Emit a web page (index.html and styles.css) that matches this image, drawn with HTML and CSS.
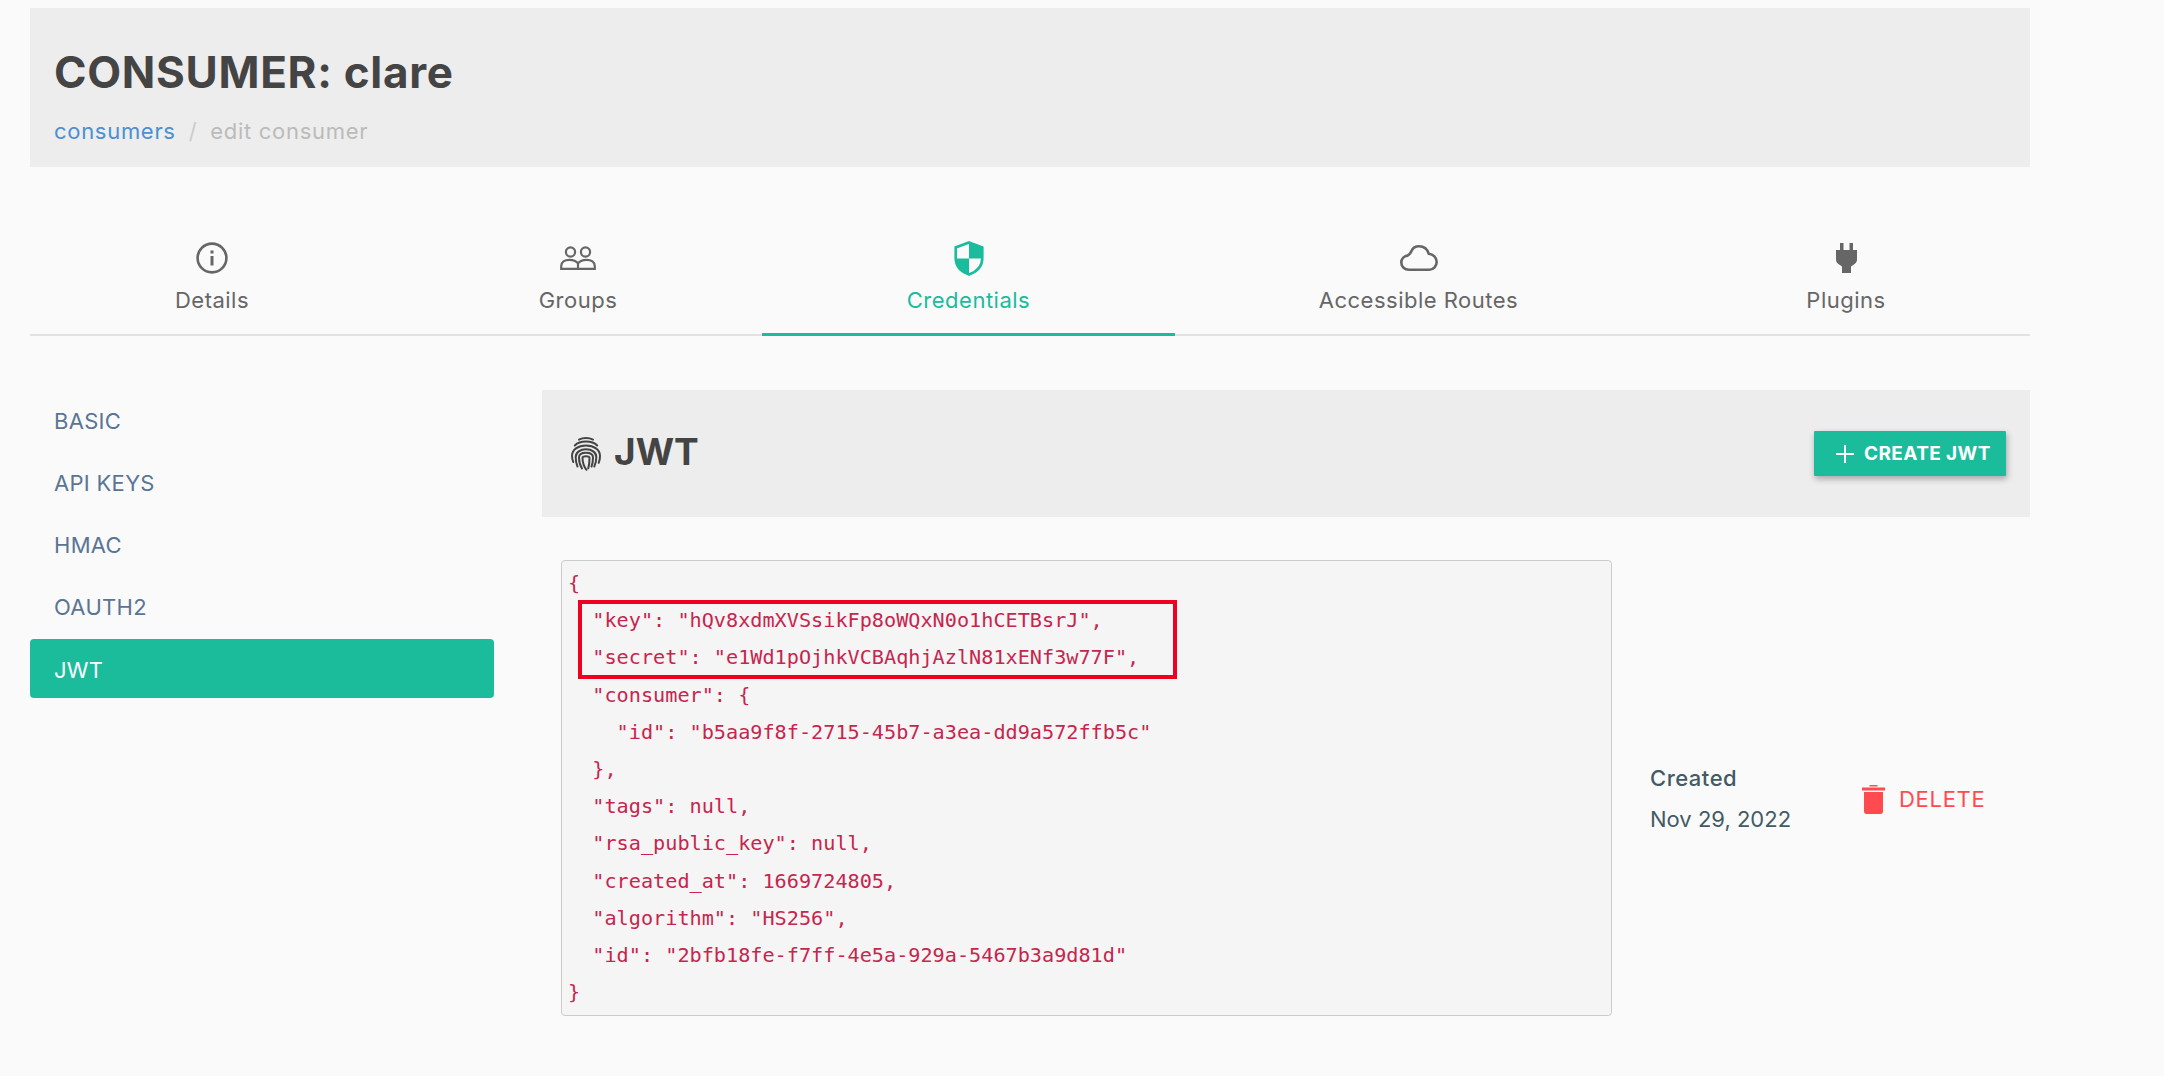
FILE: index.html
```html
<!DOCTYPE html>
<html lang="en">
<head>
<meta charset="utf-8">
<title>Consumer: clare</title>
<link rel="stylesheet" href="styles.css">
</head>
<body>
<main class="page">
  <header class="page-head">
    <h1 class="page-title">CONSUMER: clare</h1>
    <nav class="crumbs"><a class="crumb-link">consumers</a><span class="crumb-sep">/</span><span class="crumb-current">edit consumer</span></nav>
  </header>

  <nav class="tabs">
    <a class="tab">
      <span class="tab-slot"><svg width="32" height="32" viewBox="0 0 32 32" fill="none" stroke="currentColor" stroke-width="2.6"><circle cx="16" cy="16" r="14.4"/><path d="M16 14v9.5" stroke-width="3"/><path d="M16 8.5v3" stroke-width="3"/></svg></span>
      <span class="tab-label">Details</span>
    </a>
    <a class="tab">
      <span class="tab-slot"><svg width="36" height="24" viewBox="0 0 36 24" fill="none" stroke="currentColor" stroke-width="2.2"><circle cx="10.5" cy="6" r="4.6"/><circle cx="25.5" cy="6" r="4.6"/><path d="M1.2 22.8v-2.6c0-4 3.4-6.4 8.3-6.4 3.6 0 6.7 1.3 8.5 3.6 1.8-2.3 4.9-3.6 8.5-3.6 4.9 0 8.3 2.4 8.3 6.4v2.6zM18 17.4v5.4"/></svg></span>
      <span class="tab-label">Groups</span>
    </a>
    <a class="tab tab-active">
      <span class="tab-slot"><svg width="30" height="35" viewBox="0 0 30 35" fill="none"><path d="M15 1.5 28.300 6.500v10.500c0 8-5.300 13.700-13.300 16.500C7 30.700 1.700 25 1.700 17V6.500z" stroke="currentColor" stroke-width="2.600" fill="#fafafa"/><path d="M15 1.500 28.300 6.500V17.500H15zM15 17.500V33.500C7 30.700 1.700 25 1.700 17.500z" fill="currentColor"/></svg></span>
      <span class="tab-label">Credentials</span>
    </a>
    <a class="tab">
      <span class="tab-slot"><svg width="38" height="26" viewBox="0 0 38 26" fill="none" stroke="currentColor" stroke-width="2.6" stroke-linejoin="round"><path d="M9 24.700C4.600 24.700 1.300 21.700 1.300 17.600c0-3.600 2.600-6.500 6.200-7C9.500 9.500 10.500 8.500 11.500 6 12.800 3 15.500 1.300 19 1.300c5 0 8.500 3.200 9.800 7.500 4.400.4 7.900 3.700 7.900 8 0 4.500-3.200 7.900-7.300 7.900z"/></svg></span>
      <span class="tab-label">Accessible Routes</span>
    </a>
    <a class="tab">
      <span class="tab-slot"><svg width="21" height="30" viewBox="0 0 21 30" fill="currentColor"><rect x="4" y="0" width="3.500" height="8"/><rect x="13.500" y="0" width="3.500" height="8"/><path d="M0 7h21v9.500c0 2.500-1.300 4-3.500 5.300L15 23.500V30H6v-6.500l-2.500-1.700C1.300 20.500 0 19 0 16.500z"/></svg></span>
      <span class="tab-label">Plugins</span>
    </a>
  </nav>

  <div class="workspace">
    <aside class="side-nav">
      <a class="side-item">BASIC</a>
      <a class="side-item">API KEYS</a>
      <a class="side-item">HMAC</a>
      <a class="side-item">OAUTH2</a>
      <a class="side-item side-item-active">JWT</a>
    </aside>

    <section class="content">
      <div class="panel-head">
        <h2 class="panel-title">
          <svg width="30" height="34" viewBox="0 0 30 34" fill="none" stroke="#444" stroke-width="2" stroke-linecap="round"><path d="M8 2.600C10 1.600 12.500 1.100 15 1.100s5 .5 7 1.500"/><path d="M3.800 8.500C6.500 5.800 10.500 4.600 15 4.600s8.500 1.200 11.200 3.900"/><path d="M2.300 25c-.9-2-1.300-4-1.300-6.200C1 12.500 7 8.600 15 8.600s14 3.900 14 10.200c0 2.700-.4 5-1.300 7"/><path d="M6.500 29.500C5.200 26.500 4.700 23.500 4.700 20c0-4.800 4.700-7.700 10.300-7.700S25.300 15.200 25.300 20c0 3-.5 6.500-2 9.500"/><path d="M11 31.500c-1.900-3-3-6.500-3-11 0-3 3-4.700 7-4.700s7 1.700 7 4.700c0 3.500-.4 6.500-1.500 9"/><path d="M15.500 32.800c-2.700-3.300-4-7.500-4-12 0-1 1.500-1.600 3.500-1.600s3.500.6 3.500 1.600c0 4-.4 7.700-1.200 10.500"/></svg>
          <span>JWT</span>
        </h2>
        <button class="create-btn" type="button"><svg width="18" height="18" viewBox="0 0 18 18" stroke="currentColor" stroke-width="2"><path d="M9 0v18M0 9h18"/></svg><span>CREATE JWT</span></button>
      </div>

      <div class="cred-row">
        <div class="code-wrap">
<pre class="code">{
  "key": "hQv8xdmXVSsikFp8oWQxN0o1hCETBsrJ",
  "secret": "e1Wd1pOjhkVCBAqhjAzlN81xENf3w77F",
  "consumer": {
    "id": "b5aa9f8f-2715-45b7-a3ea-dd9a572ffb5c"
  },
  "tags": null,
  "rsa_public_key": null,
  "created_at": 1669724805,
  "algorithm": "HS256",
  "id": "2bfb18fe-f7ff-4e5a-929a-5467b3a9d81d"
}</pre>
          <div class="highlight-box"></div>
        </div>
        <div class="meta">
          <div class="meta-label">Created</div>
          <div class="meta-value">Nov 29, 2022</div>
        </div>
        <a class="delete"><svg width="23" height="29" viewBox="0 0 23 29" fill="currentColor"><path d="M7.500 1.500h8V0h-8zM0 2.500h23v3H0zM2 7h19v19.500c0 1.400-1.100 2.500-2.500 2.500h-14C3.100 29 2 27.900 2 26.500z"/></svg><span>DELETE</span></a>
      </div>
    </section>
  </div>
</main>
</body>
</html>
```
FILE: styles.css
```css
* { box-sizing: border-box; }

html, body { margin: 0; height: 100%; }

body {
  background: #fafafa;
  font-family: Inter, "Noto Sans", sans-serif;
  color: #444;
}

.page { width: 2000px; margin-left: 30px; padding-top: 8px; }

.page-head {
  height: 159px;
  background: #ededed;
  padding: 0 24px;
  display: flex;
  flex-direction: column;
}

.page-title {
  margin: 39px 0 0;
  font-size: 44px;
  line-height: 50px;
  font-weight: 700;
  color: #444;
  letter-spacing: .7px;
}

.crumbs {
  margin-top: 19px;
  font-size: 22px;
  line-height: 30px;
  letter-spacing: .7px;
  display: flex;
}

.crumb-link { color: #4a90d2; }
.crumb-sep { color: #ccc; margin: 0 13px; }
.crumb-current { color: #bbb; }

.tabs {
  margin-top: 43px;
  height: 126px;
  display: grid;
  grid-template-columns: 364px 368px 413px 487px 368px;
  border-bottom: 2px solid #e2e2e2;
}

.tab {
  color: #666;
  font-size: 22px;
  letter-spacing: .5px;
  height: 126px;
  padding-top: 30px;
  display: flex;
  flex-direction: column;
  align-items: center;
}

.tab-slot { height: 36px; display: flex; align-items: center; justify-content: center; }
.tab-label { margin-top: 9px; line-height: 30px; white-space: nowrap; }

.tab-active { color: #1abc9c; border-bottom: 3px solid #1abc9c; }

.workspace {
  margin-top: 54px;
  display: flex;
  gap: 48px;
  align-items: flex-start;
}

.side-nav {
  width: 464px;
  flex: none;
  display: flex;
  flex-direction: column;
  gap: 3.250px;
}

.side-item {
  height: 59px;
  padding: 2px 0 0 24px;
  display: flex;
  align-items: center;
  font-size: 22px;
  letter-spacing: .3px;
  color: #5a7594;
  border-radius: 4px;
}

.side-item-active { background: #1abc9c; color: #fff; }

.content { flex: 1; min-width: 0; }

.panel-head {
  height: 127px;
  background: #ededed;
  display: flex;
  align-items: center;
  justify-content: space-between;
  padding: 0 24px 0 29px;
}

.panel-title {
  margin: 0;
  display: flex;
  align-items: center;
  gap: 13px;
  font-size: 37px;
  font-weight: 700;
  color: #444;
}

.panel-title span { margin-bottom: 5px; }

.create-btn {
  width: 192px;
  height: 45px;
  border: 0;
  border-radius: 1px;
  background: #1abc9c;
  color: #fff;
  font-family: inherit;
  font-size: 19px;
  font-weight: 700;
  letter-spacing: .4px;
  display: flex;
  align-items: center;
  gap: 10px;
  padding: 0 0 0 22px;
  box-shadow: 1px 3px 6px rgba(0, 0, 0, .3);
}

.cred-row {
  margin-top: 43px;
  padding-left: 19px;
  display: flex;
  align-items: center;
}

.code-wrap { position: relative; width: 1051px; flex: none; }

.code {
  margin: 0;
  height: 456px;
  padding: 4px 6px;
  background: #f5f5f5;
  border: 1px solid #ccc;
  border-radius: 4px;
  font-family: "DejaVu Sans Mono", monospace;
  font-size: 20.2px;
  line-height: 37.200px;
  color: #c7254e;
}

.highlight-box {
  position: absolute;
  left: 17px;
  top: 40px;
  width: 599px;
  height: 79px;
  border: 4px solid #ee0020;
}

.meta { margin-left: 38px; width: 212px; flex: none; padding-top: 20px; color: #435a66; font-size: 22px; }
.meta-label { font-weight: 500; line-height: 30px; letter-spacing: .5px; }
.meta-value { margin-top: 11px; line-height: 30px; }

.delete {
  display: flex;
  align-items: center;
  gap: 14px;
  color: #ff4a50;
  font-size: 22px;
  letter-spacing: .7px;
  padding-top: 22px;
}
```
